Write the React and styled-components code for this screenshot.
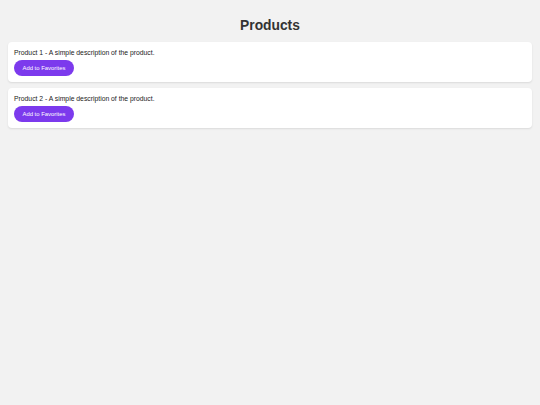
import React from "react";
import styled, { createGlobalStyle } from "styled-components";

const Global = createGlobalStyle`
  html, body {
    margin: 0;
    padding: 0;
    background: #f2f2f2;
    font-family: "Liberation Sans", Arial, sans-serif;
  }
`;

const Page = styled.div`
  padding: 17px 8px 8px;
  display: flex;
  flex-direction: column;
`;

const Title = styled.h1`
  margin: 0 0 8px;
  text-align: center;
  font-size: 13.8px;
  line-height: 17px;
  font-weight: 700;
  color: #333;
`;

const List = styled.div`
  display: flex;
  flex-direction: column;
  gap: 6px;
`;

const Card = styled.div`
  background: #fff;
  border-radius: 4px;
  box-shadow: 0 1px 2px rgba(0, 0, 0, 0.1);
  padding: 6px 6px 6px;
  display: flex;
  flex-direction: column;
  align-items: flex-start;
  gap: 3px;
`;

const Desc = styled.p`
  margin: 0;
  font-size: 6.8px;
  line-height: 9px;
  color: #222;
`;

const FavButton = styled.button`
  border: none;
  background: #7c3aed;
  color: #fff;
  font-family: inherit;
  font-size: 5.9px;
  height: 16px;
  padding: 0 8.5px;
  border-radius: 8px;
  cursor: pointer;
`;

const products = [
  { id: 1, text: "Product 1 - A simple description of the product." },
  { id: 2, text: "Product 2 - A simple description of the product." },
];

export default function App() {
  return (
    <>
      <Global />
      <Page>
        <Title>Products</Title>
        <List>
          {products.map((p) => (
            <Card key={p.id}>
              <Desc>{p.text}</Desc>
              <FavButton>Add to Favorites</FavButton>
            </Card>
          ))}
        </List>
      </Page>
    </>
  );
}
